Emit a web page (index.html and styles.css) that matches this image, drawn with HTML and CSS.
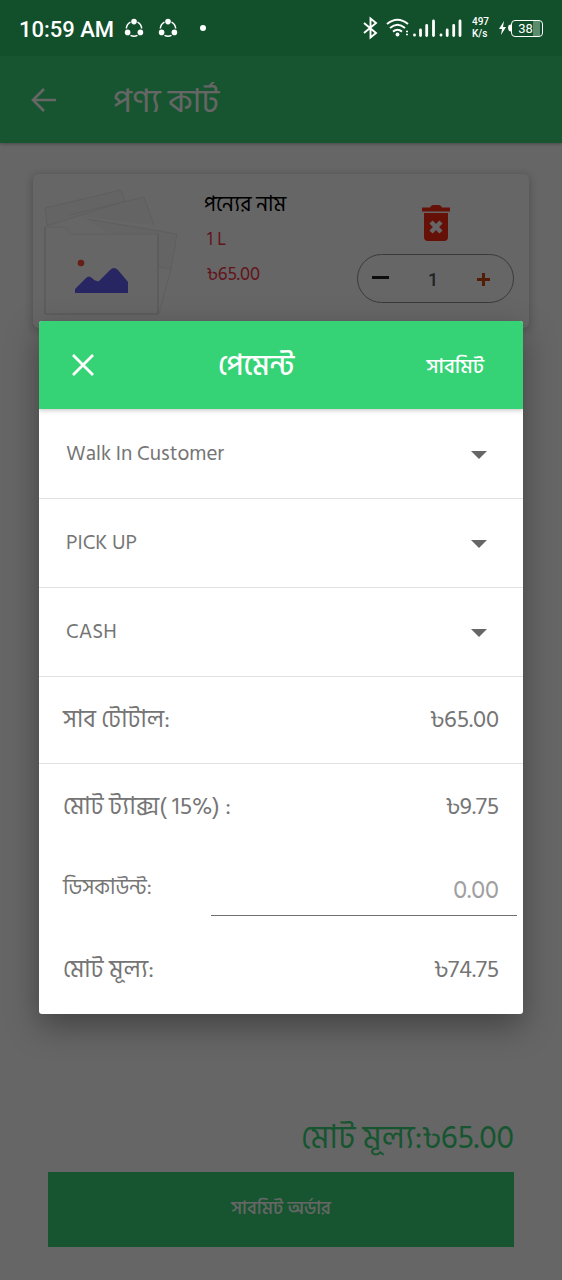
FILE: index.html
```
<!DOCTYPE html>
<html lang="bn">
<head>
  <meta charset="UTF-8">
  <meta name="viewport" content="width=device-width, initial-scale=1.0">
  <title>পণ্য কার্ট</title>
  <link rel="stylesheet" href="styles.css">
</head>
<body>
  <div class="screen">
    <!-- Status bar -->
    <div class="status-bar">
      <span class="time">10:59 AM</span>
      <svg class="share-icon" width="20" height="20" viewBox="0 0 20 20" fill="#fff">
        <circle cx="10" cy="3.6" r="2.8"/><circle cx="3.6" cy="14.4" r="2.8"/><circle cx="16.4" cy="14.4" r="2.8"/>
        <path d="M6.5 4.2A8 8 0 0 0 2.3 10.5M13.5 4.2A8 8 0 0 1 17.7 10.5M6.5 17.4A8 8 0 0 0 13.5 17.4" fill="none" stroke="#fff" stroke-width="1.5"/>
      </svg>
      <svg class="share-icon second" width="20" height="20" viewBox="0 0 20 20" fill="#fff">
        <circle cx="10" cy="3.6" r="2.8"/><circle cx="3.6" cy="14.4" r="2.8"/><circle cx="16.4" cy="14.4" r="2.8"/>
        <path d="M6.5 4.2A8 8 0 0 0 2.3 10.5M13.5 4.2A8 8 0 0 1 17.7 10.5M6.5 17.4A8 8 0 0 0 13.5 17.4" fill="none" stroke="#fff" stroke-width="1.5"/>
      </svg>
      <span class="dot"></span>
      <div class="status-right">
        <svg width="102" height="24" viewBox="0 0 102 24" fill="none" stroke="#fff">
          <path d="M2 7L14 17L8.5 21.5V2.5L14 7L2 17" stroke-width="1.9"/>
          <path d="M25 8Q35.5 -.5 46 8M28 12Q35.5 5.5 43 12M31 15.6Q35.5 12 40 15.6" stroke-width="2"/>
          <circle cx="35.5" cy="18.5" r="1.9" fill="#fff" stroke="none"/>
          <path d="M44 15.5h2M44 18.5h2" stroke-width="1.5"/>
          <path d="M52.5 19v.2M58.5 14v5.5M64.7 9.5v10M71.5 5v14.5" stroke-width="2.8" stroke-linecap="round"/>
          <path d="M79 19v.2M85.2 14v5.5M91.7 9.5v10M98 5v14.5" stroke-width="2.8" stroke-linecap="round"/>
        </svg>
        <span class="speed">497<br>K/s</span>
        <svg class="bolt" width="12" height="14" viewBox="0 0 12 14" fill="#fff">
          <path d="M5 0L0 8H3L2 14L7 6H4Z"/><path d="M12 3.5V10.5Q9 10.5 9 7Q9 3.5 12 3.5Z"/>
        </svg>
        <span class="battery">38</span>
      </div>
    </div>

    <!-- App bar -->
    <div class="app-bar">
      <svg width="28" height="28" viewBox="0 0 28 28" fill="none" stroke="#fff" stroke-width="2.6">
        <path d="M26 14H3M14 3L3 14L14 25"/>
      </svg>
      <h1>পণ্য কার্ট</h1>
    </div>

    <!-- Cart item -->
    <div class="cart-item">
      <svg class="thumb" width="136" height="128" viewBox="0 0 136 128" fill="none" stroke="#ebebeb">
        <path d="M2 20L78 2L82 13L4 38ZM26 27L101 9L111 37M44 31L134 46L128 81L116 79M128 81L116 126" fill="#fafafa"/>
        <path d="M2 39H20Q25 39 27 46H115V126H2Z" fill="#fff" stroke="none"/>
        <path d="M2 39H20Q25 39 27 46H115" stroke="#eee"/>
        <path d="M2 39V126H115V46" stroke="#d2d2d2"/>
        <circle cx="38" cy="75" r="3.3" fill="#ff4f37" stroke="none"/>
        <path d="M32 101L43 90Q46 87 49 90Q52 94 56 93L67 82Q71 78 75 82L85 94V105H32Z" fill="#6560f4" stroke="none"/>
      </svg>
      <div class="item-info">
        <h2>পন্যের নাম</h2>
        <p>1 L</p>
        <p>৳65.00</p>
      </div>
      <div class="item-actions">
        <svg width="28" height="36" viewBox="0 0 28 36">
          <path d="M0 2.5H8Q9 0 11 0H17Q19 0 20 2.5H28V6.5H0ZM2 8H26V32Q26 36 22 36H6Q2 36 2 32Z" fill="#ff2b16"/>
          <path d="M9 17L19 27M19 17L9 27" stroke="#fff" stroke-width="4.5"/>
        </svg>
        <div class="quantity">
          <span class="minus"></span>
          <span class="count">1</span>
          <span class="plus"></span>
        </div>
      </div>
    </div>

    <!-- Order footer -->
    <div class="order-footer">
      <div class="order-total">মোট মূল্য:৳65.00</div>
      <button class="order-button">সাবমিট অর্ডার</button>
    </div>

    <!-- Payment dialog -->
    <div class="overlay">
      <div class="dialog">
        <div class="dialog-header">
          <svg width="24" height="24" viewBox="0 0 24 24" stroke="#fff" stroke-width="2.8">
            <path d="M2 2L22 22M22 2L2 22"/>
          </svg>
          <h2>পেমেন্ট</h2>
          <span class="submit">সাবমিট</span>
        </div>
        <div class="select-row customer"><span>Walk In Customer</span><i class="caret"></i></div>
        <div class="select-row"><span>PICK UP</span><i class="caret"></i></div>
        <div class="select-row"><span>CASH</span><i class="caret"></i></div>
        <div class="amount-row subtotal"><span>সাব টোটাল:</span><span>৳65.00</span></div>
        <div class="amount-row tax"><span>মোট ট্যাক্স( 15%) :</span><span>৳9.75</span></div>
        <div class="discount-row"><span class="discount-label">ডিসকাউন্ট:</span><span class="discount-input">0.00</span></div>
        <div class="amount-row total"><span>মোট মূল্য:</span><span>৳74.75</span></div>
      </div>
    </div>
  </div>
</body>
</html>
```
FILE: styles.css
```
/* Base */
* {
  box-sizing: border-box;
}

body {
  margin: 0;
  font-family: "Hind Siliguri", "Noto Sans", "Noto Sans Bengali", sans-serif;
  color: #757575;
}

h1, h2, p {
  margin: 0;
}

svg {
  display: block;
  flex-shrink: 0;
}

.screen {
  position: relative;
  width: 562px;
  height: 1280px;
  overflow: hidden;
  background: #fff;
  display: flex;
  flex-direction: column;
}

/* Status bar, drawn above the dimmed page */
.status-bar {
  position: relative;
  z-index: 2;
  height: 56px;
  flex-shrink: 0;
  padding: 0 19px;
  background: #124f2b;
  color: #fff;
  font-family: Roboto, sans-serif;
  display: flex;
  align-items: center;
}

.time {
  padding-top: 2px;
  font-size: 22px;
  font-weight: 500;
  width: 105px;
  white-space: nowrap;
}

.share-icon.second {
  margin-left: 14px;
}

.dot {
  width: 6px;
  height: 6px;
  margin-left: 22px;
  border-radius: 50%;
  background: #fff;
}

.status-right {
  margin-left: auto;
  display: flex;
  align-items: center;
}

.speed {
  width: 17px;
  margin-left: 8px;
  margin-right: 1px;
  font-size: 10px;
  font-weight: 500;
  line-height: 12px;
}

.bolt {
  margin-left: 9px;
}

.battery {
  width: 32px;
  height: 17px;
  padding-right: 3px;
  border: 1.5px solid #fff;
  border-radius: 4px;
  background: linear-gradient(90deg, transparent 0 70%, #5b8c6e 70% 95%, transparent 95%);
  font-size: 13px;
  line-height: 15px;
  text-align: center;
}

/* App bar */
.app-bar {
  height: 87px;
  flex-shrink: 0;
  padding-left: 30px;
  background: #37d576;
  color: #fff;
  display: flex;
  align-items: center;
  box-shadow: 0 1px 3px rgba(0, 0, 0, 0.3);
}

.app-bar h1 {
  margin-left: 55px;
  padding-top: 4px;
  font-size: 33px;
  font-weight: 400;
}

/* Cart item */
.cart-item {
  height: 154px;
  flex-shrink: 0;
  margin: 31px 33px 0;
  padding: 14px 15px 0 10px;
  border-radius: 6px;
  background: #fff;
  box-shadow: 0 2px 8px 2px rgba(0, 0, 0, 0.18);
  display: flex;
}

.item-info {
  padding-left: 25px;
  color: #f6354a;
  font-size: 18.5px;
}

.item-info h2 {
  height: 33px;
  color: #000;
  font-size: 21px;
  font-weight: 400;
  line-height: 34px;
  white-space: nowrap;
}

.item-info p {
  height: 35px;
  padding-left: 3px;
  line-height: 37px;
}

.item-actions {
  margin-left: auto;
  padding-top: 17px;
  display: flex;
  flex-direction: column;
  align-items: center;
  gap: 13px;
}

.quantity {
  width: 157px;
  height: 49px;
  border: 1.5px solid #909090;
  border-radius: 25px;
  color: #555;
  font-family: Roboto, sans-serif;
  font-size: 18px;
  font-weight: 500;
  display: flex;
  align-items: center;
  justify-content: space-between;
  padding: 0 23px 0 14px;
}

.count {
  padding-top: 2px;
}

.minus {
  width: 17px;
  height: 3px;
  margin-bottom: 2px;
  background: #222;
}

.plus {
  width: 13px;
  height: 13px;
  margin-top: 1px;
  background:
    linear-gradient(#ca4a10, #ca4a10) center / 13px 3px no-repeat,
    linear-gradient(#ca4a10, #ca4a10) center / 3px 13px no-repeat;
}

/* Order footer */
.order-footer {
  margin-top: auto;
  padding: 0 48px 33px;
}

.order-total {
  height: 68px;
  color: #37d576;
  font-size: 32px;
  line-height: 68px;
  text-align: right;
}

.order-button {
  display: block;
  width: 100%;
  height: 75px;
  padding: 0 0 3px;
  border: 0;
  background: #37d576;
  color: #fff;
  font: 500 18.5px "Hind Siliguri", "Noto Sans", "Noto Sans Bengali", sans-serif;
}

/* Payment dialog */
.overlay {
  position: absolute;
  inset: 0;
  background: rgba(0, 0, 0, 0.6);
  padding: 321px 39px 0;
}

.dialog {
  height: 693px;
  background: #fff;
  border-radius: 3px;
  overflow: hidden;
  box-shadow: 0 12px 32px rgba(0, 0, 0, 0.35);
}

.dialog-header {
  position: relative;
  height: 88px;
  padding: 0 39px 0 32px;
  background: #35d375;
  box-shadow: 0 2px 4px rgba(0, 0, 0, 0.18);
  color: #fff;
  display: flex;
  align-items: center;
}

.dialog-header h2 {
  margin-left: 123px;
  padding-top: 3px;
  font-size: 29px;
  font-weight: 500;
}

.submit {
  margin-left: auto;
  padding-top: 2px;
  font-size: 20.5px;
  font-weight: 500;
}

.select-row {
  height: 89px;
  padding: 0 36px 0 27px;
  border-bottom: 1.5px solid #e2e2e2;
  font-size: 21px;
  display: flex;
  align-items: center;
  justify-content: space-between;
}

.select-row.customer {
  height: 90px;
}

.caret {
  border: 8px solid transparent;
  border-top-color: #666;
  border-bottom: 0;
  margin-top: 2px;
}

.amount-row {
  height: 87px;
  padding: 0 24px 2px;
  font-size: 24px;
  display: flex;
  align-items: center;
  justify-content: space-between;
}

.amount-row.subtotal {
  border-bottom: 1.5px solid #e2e2e2;
}

.amount-row.tax {
  height: 86px;
}

.discount-row {
  height: 66px;
  padding: 0 6px 0 24px;
  display: flex;
  justify-content: space-between;
}

.discount-label {
  font-size: 21px;
  line-height: 77px;
}

.discount-input {
  width: 306px;
  padding-right: 18px;
  border-bottom: 1.5px solid #707070;
  color: #a0a0a0;
  font-size: 25.5px;
  line-height: 82px;
  text-align: right;
}

.amount-row.total {
  height: 107px;
  padding-bottom: 0;
}
```
